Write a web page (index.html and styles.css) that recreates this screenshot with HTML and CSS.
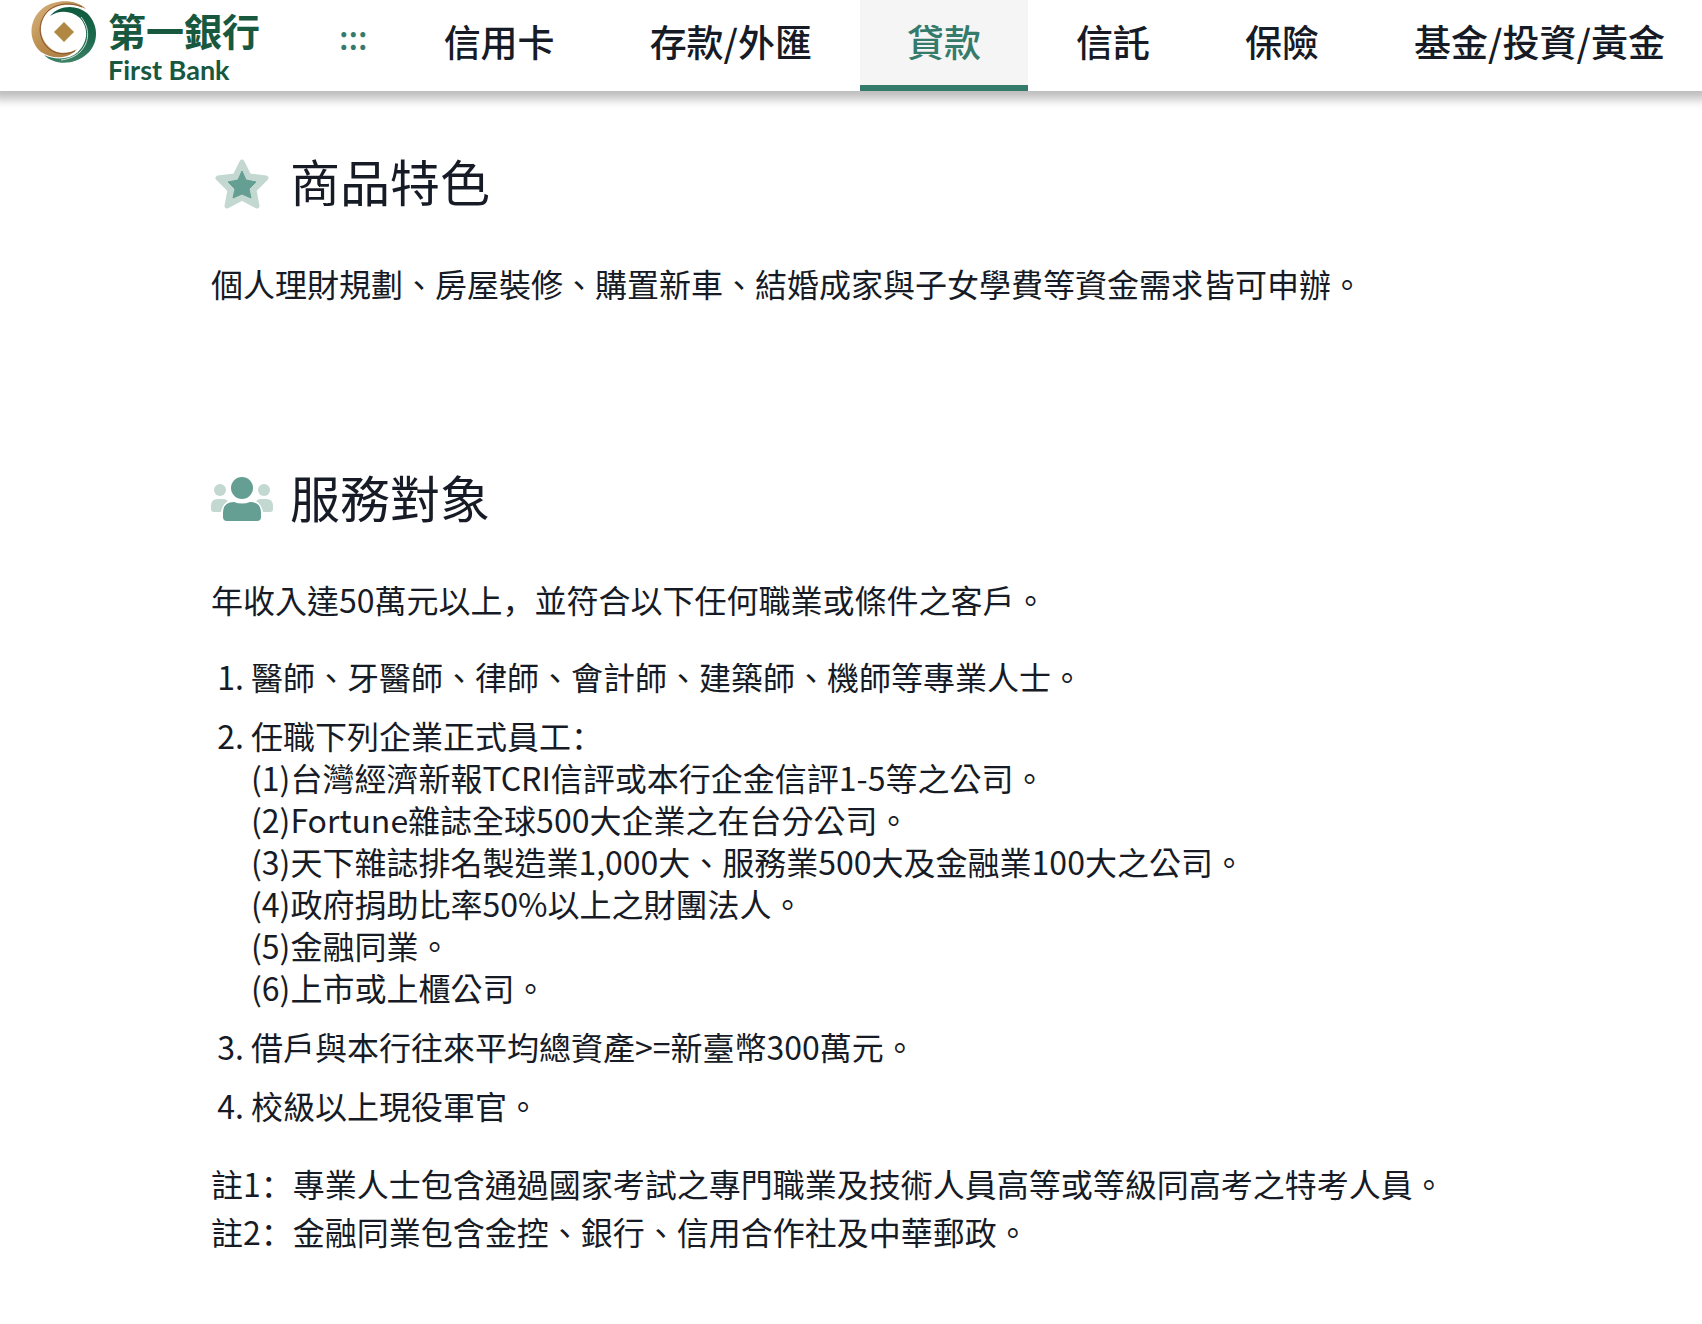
FILE: index.html
```html
<!DOCTYPE html>
<html lang="zh-Hant-TW">
<head>
    <meta charset="UTF-8">
    <meta name="viewport" content="width=device-width, initial-scale=1.0">
    <title>第一銀行</title>
    <link rel="stylesheet" href="styles.css">
</head>
<body>
    <header class="header">
        <a class="logo" href="#">
            <svg class="logo-mark" viewBox="0 0 66 66" aria-hidden="true">
                <defs>
                    <linearGradient id="gold" x1="0" y1="0" x2="1" y2="1">
                        <stop offset="0" stop-color="#d9b583"/>
                        <stop offset="0.5" stop-color="#ba8d4e"/>
                        <stop offset="1" stop-color="#a5763f"/>
                    </linearGradient>
                    <linearGradient id="green" x1="0" y1="0" x2="0" y2="1">
                        <stop offset="0" stop-color="#0f5a3f"/>
                        <stop offset="0.6" stop-color="#1f6b50"/>
                        <stop offset="1" stop-color="#3f8267"/>
                    </linearGradient>
                </defs>
                <path fill="url(#gold)" d="M55 9C45 -1 25 -1 12 8C-3 20 -3 41 10 52C22 60 38 59 46 49C36 55 24 54 17 46C7 36 8 20 18 11C28 3 43 3 55 9Z"/>
                <path fill="none" stroke="#8a5330" d="M44 51C34 56 23 54 16 47C6 36 7 20 18 10C27 3 40 2 51 7"/>
                <path fill="url(#green)" d="M19 16C28 5 45 4 56 13C68 25 68 43 56 54C44 65 24 66 13 55C24 60 38 60 47 52C57 42 58 28 49 18C40 10 28 10 19 16Z"/>
                <path fill="none" stroke="#cfe3d9" d="M50 17C59 28 59 42 49 52C45 56 38 59 30 60"/>
                <path fill="#b08843" d="M33 22L43 32L33 42L23 32Z"/>
            </svg>
            <span class="logo-text">
                <span class="logo-name">第一銀行</span>
                <span class="logo-en">First Bank</span>
            </span>
        </a>
        <nav class="nav">
            <a class="accesskey" href="#" accesskey="U">:::</a>
            <ul class="menu">
                <li><a href="#">信用卡</a></li>
                <li><a href="#">存款/外匯</a></li>
                <li><a class="active" href="#">貸款</a></li>
                <li><a href="#">信託</a></li>
                <li><a href="#">保險</a></li>
                <li><a href="#">基金/投資/黃金</a></li>
            </ul>
        </nav>
    </header>

    <main class="content">
        <section class="block">
            <h2>
                <svg class="icon" viewBox="0 0 64 64" aria-hidden="true">
                    <path fill="#c2d8d1" stroke="#c2d8d1" stroke-width="5" stroke-linejoin="round" d="M31 11L38 25L55 27L43 39L46 55L31 47L16 55L19 39L7 27L24 25Z"/>
                    <path fill="#659e92" stroke="#659e92" stroke-width="1" stroke-linejoin="round" d="M31 20L35 29L45 31L38 38L40 47L31 43L22 47L24 38L17 31L27 29Z"/>
                </svg>
                商品特色
            </h2>
            <p>個人理財規劃、房屋裝修、購置新車、結婚成家與子女學費等資金需求皆可申辦。</p>
        </section>

        <section class="block">
            <h2>
                <svg class="icon" viewBox="0 0 64 64" aria-hidden="true">
                    <g fill="#c2d8d1">
                        <circle cx="9" cy="23" r="6"/>
                        <circle cx="53" cy="23" r="6"/>
                        <path d="M7 32H12Q15 32 17 34Q11 38 10 45H3Q0 45 0 42V39Q0 32 7 32Z"/>
                        <path d="M55 32H50Q47 32 45 34Q51 38 52 45H59Q62 45 62 42V39Q62 32 55 32Z"/>
                    </g>
                    <g fill="#659e92">
                        <circle cx="31" cy="21" r="11"/>
                        <path d="M23 35Q31 38 39 35Q50 35 50 46V50Q50 54 46 54H16Q12 54 12 50V46Q12 35 23 35Z"/>
                    </g>
                </svg>
                服務對象
            </h2>
            <p>年收入達50萬元以上<span lang="zh-Hans" class="punct">，</span>並符合以下任何職業或條件之客戶。</p>
            <ol>
                <li>醫師、牙醫師、律師、會計師、建築師、機師等專業人士。</li>
                <li>
                    任職下列企業正式員工<span lang="zh-Hans" class="punct">：</span><br>
                    (1)台灣經濟新報TCRI信評或本行企金信評1-5等之公司。<br>
                    (2)Fortune雜誌全球500大企業之在台分公司。<br>
                    (3)天下雜誌排名製造業1,000大、服務業500大及金融業100大之公司。<br>
                    (4)政府捐助比率50%以上之財團法人。<br>
                    (5)金融同業。<br>
                    (6)上市或上櫃公司。
                </li>
                <li>借戶與本行往來平均總資產&gt;=新臺幣300萬元。</li>
                <li>校級以上現役軍官。</li>
            </ol>
            <p>
                註1<span lang="zh-Hans" class="punct">：</span>專業人士包含通過國家考試之專門職業及技術人員高等或等級同高考之特考人員。<br>
                註2<span lang="zh-Hans" class="punct">：</span>金融同業包含金控、銀行、信用合作社及中華郵政。
            </p>
        </section>
    </main>
</body>
</html>
```
FILE: styles.css
```css
* {
    box-sizing: border-box;
}
body {
    margin: 0;
    font-family: "Noto Sans CJK TC", sans-serif;
    font-size: 32px;
    line-height: 48px;
    color: #161b26;
    background-color: #fff;
}
a {
    color: inherit;
    text-decoration: none;
}

/* Header */
.header {
    display: flex;
    height: 91px;
    background-color: #fff;
    box-shadow: 0 0 10px 8px rgba(0, 0, 0, 0.27);
}
.logo {
    display: flex;
    flex: none;
    gap: 11px;
    padding-left: 31px;
    color: #17583f;
    font-weight: 700;
}
.logo-mark {
    width: 66px;
    height: 66px;
}
.logo-text {
    display: flex;
    flex-direction: column;
    padding-top: 10px;
}
.logo-name {
    font-size: 38px;
    line-height: 40px;
}
.logo-en {
    font-family: Lato, sans-serif;
    font-size: 27px;
    line-height: 40px;
}
.nav {
    display: flex;
    font-size: 37px;
    font-weight: 500;
    line-height: 83px;
    white-space: nowrap;
}
.accesskey {
    padding: 0 29px 0 79px;
    font-size: 32px;
    line-height: 72px;
    color: #357b6b;
}
.menu {
    display: flex;
    gap: 1px;
    margin: 0;
    padding: 0;
    list-style: none;
}
.menu a {
    display: block;
    height: 91px;
    padding: 0 47px;
    border-bottom: 6px solid transparent;
}
.menu li:last-child a {
    padding-right: 0;
}
.menu a:hover,
.menu .active {
    color: #357b6b;
    background-color: #f5f5f5;
    border-bottom-color: #357b6b;
}

/* Content */
.content {
    max-width: 1280px;
    margin: 0 auto;
    padding-top: 60px;
}
.block {
    padding-bottom: 160px;
}
h2 {
    display: flex;
    gap: 15px;
    margin: 0 0 44px;
    font-size: 50px;
    font-weight: 400;
    line-height: 58px;
}
.icon {
    width: 64px;
    height: 64px;
}
p {
    margin: 0;
}
ol {
    margin: 32px 0 33px;
    padding-left: 40px;
    line-height: 42px;
}
.content li + li {
    margin-top: 17px;
}
.block:last-child {
    padding-bottom: 60px;
}
/* comma and colon sit at the left of their box */
.punct {
    font-family: "Noto Sans CJK SC", sans-serif;
}
```
